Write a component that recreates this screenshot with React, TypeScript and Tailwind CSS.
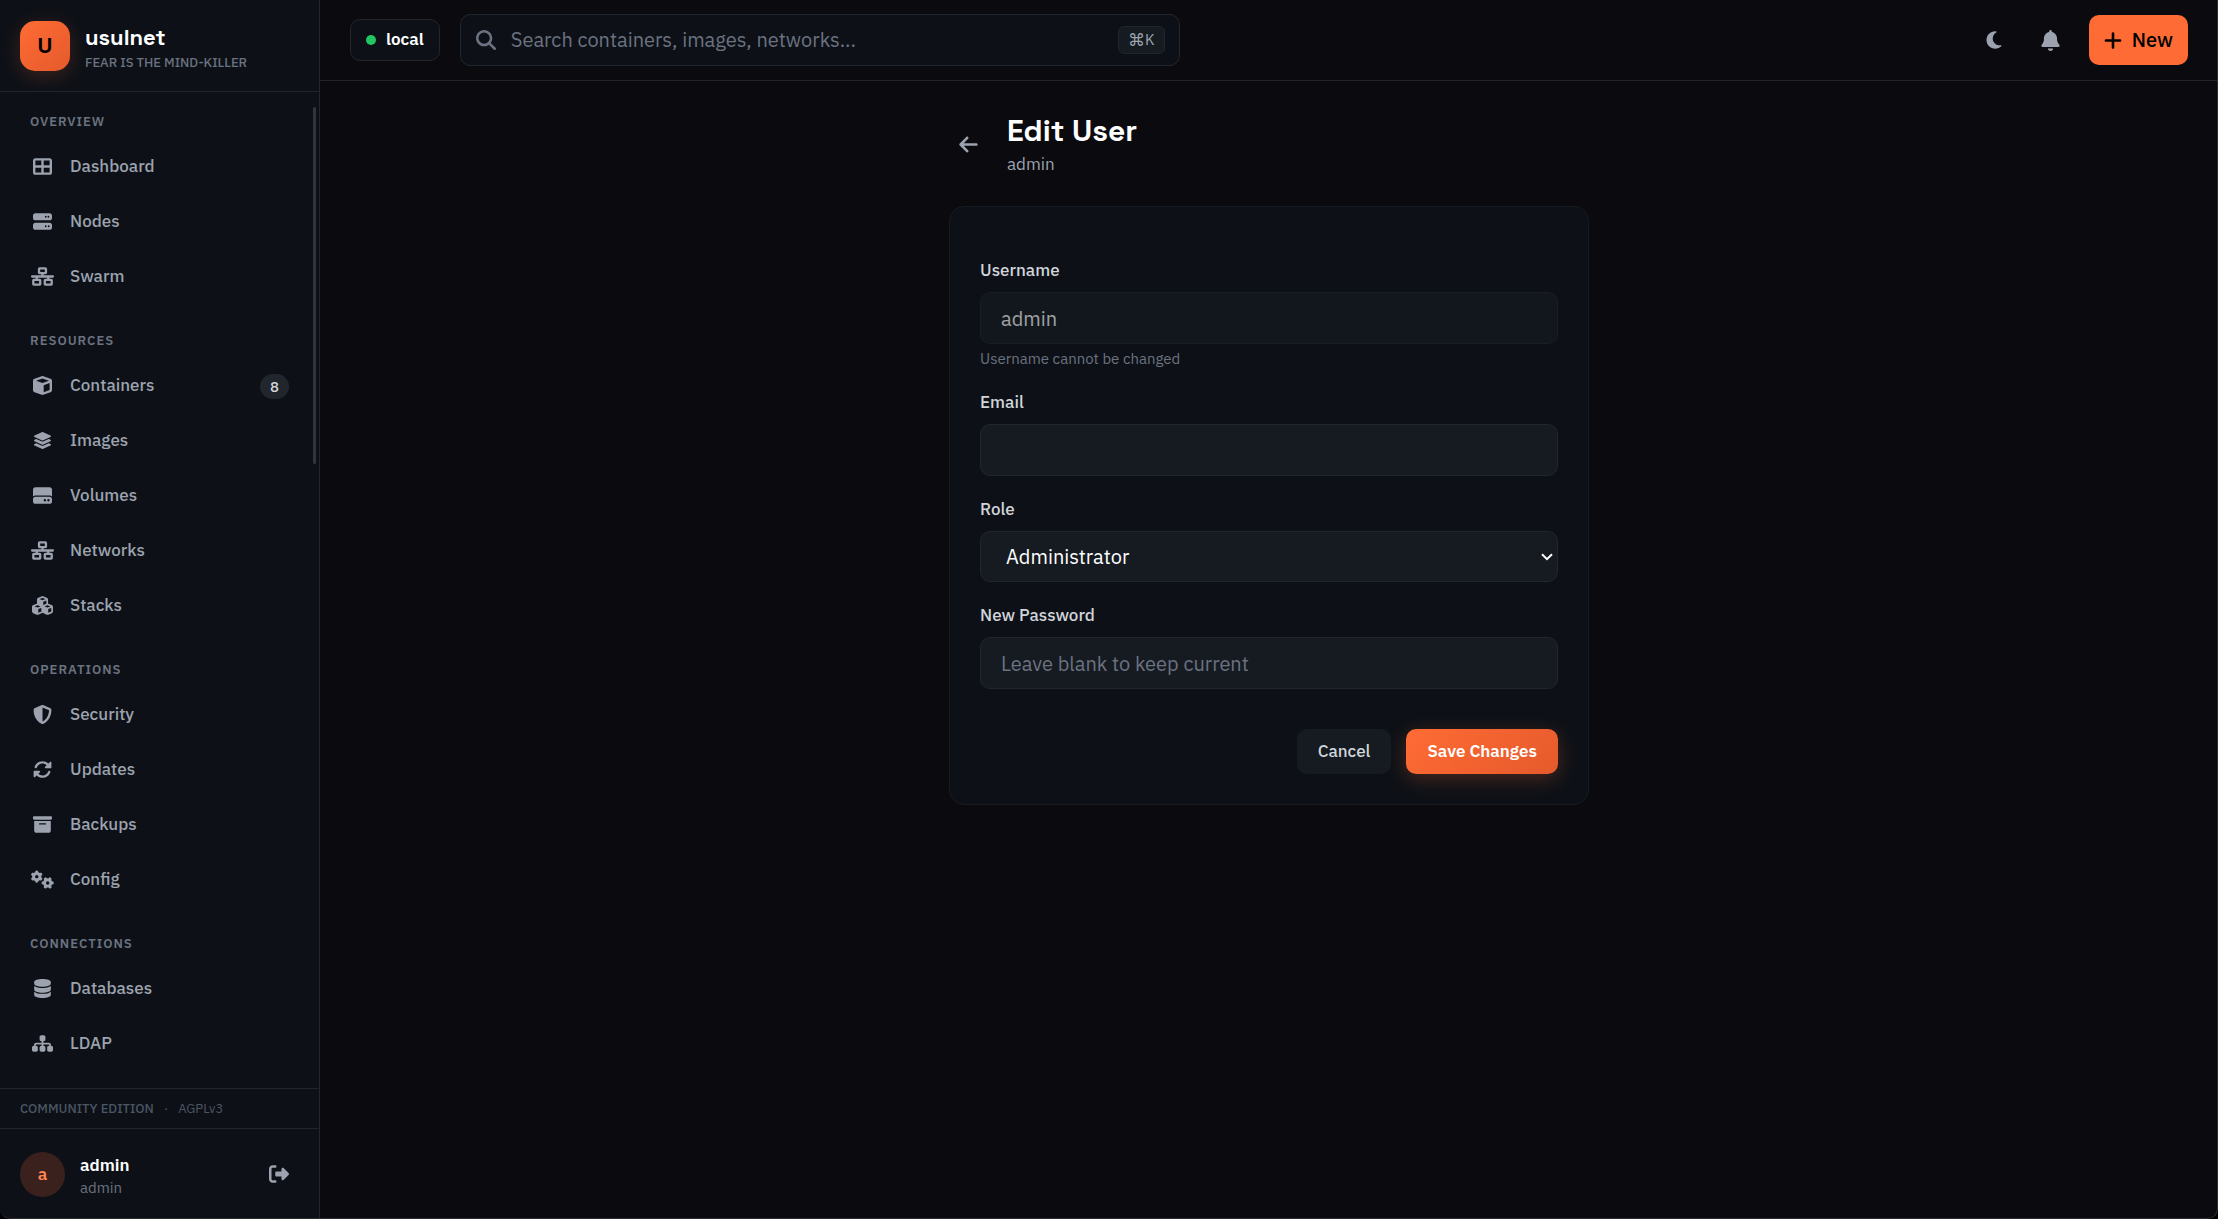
import type { ComponentType, ReactNode } from 'react';
import {
  FaArrowLeft,
  FaBell,
  FaBoxArchive,
  FaCube,
  FaCubes,
  FaDatabase,
  FaGears,
  FaHardDrive,
  FaLayerGroup,
  FaMagnifyingGlass,
  FaMoon,
  FaNetworkWired,
  FaPlus,
  FaRightFromBracket,
  FaRotate,
  FaServer,
  FaShieldHalved,
  FaSitemap,
  FaTableCellsLarge,
} from 'react-icons/fa6';

type IconType = ComponentType<{ className?: string }>;
type NavItem = { label: string; icon: IconType; size?: string; badge?: string };
type NavSection = { title: string; items: NavItem[] };

const sections: NavSection[] = [
  {
    title: 'OVERVIEW',
    items: [
      { label: 'Dashboard', icon: FaTableCellsLarge },
      { label: 'Nodes', icon: FaServer },
      { label: 'Swarm', icon: FaNetworkWired, size: 'size-[23px]' },
    ],
  },
  {
    title: 'RESOURCES',
    items: [
      { label: 'Containers', icon: FaCube, badge: '8' },
      { label: 'Images', icon: FaLayerGroup },
      { label: 'Volumes', icon: FaHardDrive },
      { label: 'Networks', icon: FaNetworkWired, size: 'size-[23px]' },
      { label: 'Stacks', icon: FaCubes, size: 'size-[21px]' },
    ],
  },
  {
    title: 'OPERATIONS',
    items: [
      { label: 'Security', icon: FaShieldHalved },
      { label: 'Updates', icon: FaRotate },
      { label: 'Backups', icon: FaBoxArchive },
      { label: 'Config', icon: FaGears, size: 'size-[23px]' },
    ],
  },
  {
    title: 'CONNECTIONS',
    items: [
      { label: 'Databases', icon: FaDatabase },
      { label: 'LDAP', icon: FaSitemap, size: 'size-[21px]' },
    ],
  },
];

function Sidebar() {
  return (
    <aside className="flex w-[320px] shrink-0 flex-col border-r border-[#21262d] bg-[#0d1117]">
      <div className="flex h-[92px] shrink-0 items-center gap-[15px] border-b border-[#21262d] px-5">
        <div className="flex size-[50px] items-center justify-center rounded-[15px] bg-linear-135 from-[#ff6b35] to-[#e55a2b] font-['Space_Grotesk','Inter',sans-serif] text-[22px] font-bold text-black shadow-[0_5px_20px_rgba(255,107,53,0.2)]">
          U
        </div>
        <div>
          <div className="font-['Space_Grotesk','Inter',sans-serif] text-[22px] leading-[34px] font-bold text-white">usulnet</div>
          <div className="text-[13px] leading-[18px] font-medium text-[#6b7280]">FEAR IS THE MIND-KILLER</div>
        </div>
      </div>

      <nav aria-label="Main" className="relative min-h-0 flex-1 overflow-hidden px-[15px] pt-5">
        {sections.map((section) => (
          <section key={section.title} className="mb-[29px]">
            <h2 className="mb-2.5 px-[15px] text-[13px] leading-[20px] font-semibold tracking-[1px] text-[#6b7280]">
              {section.title}
            </h2>
            <ul className="flex flex-col gap-[5px]">
              {section.items.map(({ label, icon: Icon, size, badge }) => (
                <li key={label}>
                  <a href="#" className="flex h-[50px] items-center gap-[15px] rounded-[10px] px-[15px] text-[17px] font-medium text-[#9ca3af]">
                    <span className="flex w-[25px] justify-center pb-0.5">
                      <Icon className={size ?? 'size-[19px]'} />
                    </span>
                    <span className="flex-1">{label}</span>
                    {badge && (
                      <span className="rounded-full bg-[#21262d] px-2.5 text-[15px] leading-[25px] text-[#d1d5db]">{badge}</span>
                    )}
                  </a>
                </li>
              ))}
            </ul>
          </section>
        ))}
        <div aria-hidden="true" className="absolute top-[15px] right-[3px] h-[357px] w-[3px] rounded-full bg-[#30363d]" />
      </nav>

      <div className="flex h-[40px] shrink-0 items-center gap-2.5 border-t border-[#21262d] px-5 text-[13px] text-[#4b5563]">
        <span className="font-medium">COMMUNITY EDITION</span>
        <span>·</span>
        <span>AGPLv3</span>
      </div>

      <div className="flex h-[91px] shrink-0 items-center gap-[15px] border-t border-[#21262d] px-5">
        <div className="flex size-[45px] items-center justify-center rounded-full bg-[#3a211d] pt-0.5 text-[17px] font-semibold text-[#ff8552]">
          a
        </div>
        <div className="flex-1 pt-0.5">
          <div className="text-[17px] leading-[25px] font-semibold text-white">admin</div>
          <div className="text-[15px] leading-[20px] text-[#6b7280]">admin</div>
        </div>
        <button type="button" aria-label="Log out" className="p-2.5 text-[#9ca3af]">
          <FaRightFromBracket className="size-5" />
        </button>
      </div>
    </aside>
  );
}

function TopBar() {
  return (
    <header className="flex h-[81px] shrink-0 items-center border-b border-[#21262d] px-[30px]">
      <button type="button" className="flex h-[42px] items-center gap-2.5 rounded-[10px] border border-[#21262d] bg-[#0d1117] px-[15px] text-[17px] font-semibold text-white">
        <span className="size-2.5 rounded-full bg-[#22c55e]" />
        local
      </button>

      <label className="ml-5 flex h-[52px] w-full max-w-[720px] items-center rounded-[10px] border border-[#21262d] bg-[#0d1117] pr-3.5 pl-[15px]">
        <FaMagnifyingGlass className="size-5 shrink-0 text-[#6b7280]" />
        <input
          type="search"
          aria-label="Search"
          placeholder="Search containers, images, networks..."
          className="ml-[15px] min-w-0 flex-1 bg-transparent text-[20px] text-white outline-none placeholder:text-[#6b7280]"
        />
        <kbd className="flex h-[28px] w-[47px] items-center justify-center rounded-[6px] border border-[#21262d] bg-[#161b22] font-['IBM_Plex_Sans','Roboto',sans-serif] text-[15px] text-[#9ca3af]">
          <span className="font-['DejaVu_Sans',sans-serif] text-[17px] leading-none">⌘</span>K
        </kbd>
      </label>

      <div className="ml-auto flex items-center">
        <button type="button" aria-label="Toggle theme" className="flex size-[46px] items-center justify-center text-[#9ca3af]">
          <FaMoon className="size-5" />
        </button>
        <button type="button" aria-label="Notifications" className="ml-[11px] flex size-[46px] items-center justify-center text-[#9ca3af]">
          <FaBell className="size-[21px]" />
        </button>
        <button type="button" className="ml-[15px] flex h-[50px] items-center gap-2.5 rounded-[10px] bg-[#ff6b35] px-[15px] text-[20px] font-medium text-black">
          <FaPlus className="h-[21px] w-[18px]" />
          New
        </button>
      </div>
    </header>
  );
}

const fieldClass =
  'block h-[52px] w-full rounded-[10px] border border-[#21262d] bg-[#161b22] px-5 text-[20px] text-white outline-none placeholder:text-[#6b7280] disabled:opacity-60';

function Field({ id, label, children }: { id: string; label: string; children: ReactNode }) {
  return (
    <div>
      <label htmlFor={id} className="mb-2 block text-[17px] leading-[27px] font-medium text-[#d1d5db]">
        {label}
      </label>
      {children}
    </div>
  );
}

function EditUserForm() {
  return (
    <form className="flex flex-col gap-5 rounded-[15px] border border-[#161b22] bg-[#0d1117] px-[30px] pt-[50px] pb-[30px]">
      <Field id="username" label="Username">
        <input id="username" type="text" defaultValue="admin" disabled className={fieldClass} />
        <p className="mt-[5px] text-[15px] leading-[20px] text-[#6b7280]">Username cannot be changed</p>
      </Field>
      <Field id="email" label="Email">
        <input id="email" type="email" className={fieldClass} />
      </Field>
      <Field id="role" label="Role">
        <div className="relative">
          <select
            id="role"
            className="block h-[51px] w-full appearance-none rounded-[10px] border border-[#21262d] bg-[#161b22] pr-8 pl-[25px] text-[20px] text-white outline-none"
          >
            <option>Administrator</option>
            <option>Operator</option>
            <option>Viewer</option>
          </select>
          <svg
            aria-hidden="true"
            viewBox="0 0 12 8"
            className="pointer-events-none absolute inset-y-0 right-[5px] my-auto h-2 w-3 fill-none stroke-white stroke-2"
          >
            <path d="M1 1.2 6 6.2l5-5" />
          </svg>
        </div>
      </Field>
      <Field id="password" label="New Password">
        <input id="password" type="password" placeholder="Leave blank to keep current" className={fieldClass} />
      </Field>
      <div className="flex justify-end gap-[15px] pt-5">
        <button type="button" className="h-[45px] rounded-[10px] bg-[#161b22] px-[21px] text-[17px] font-medium text-[#d1d5db]">
          Cancel
        </button>
        <button
          type="submit"
          className="h-[45px] rounded-[10px] bg-linear-135 from-[#ff6b35] to-[#e55a2b] px-[21px] text-[17px] font-semibold text-white shadow-[0_5px_20px_rgba(255,107,53,0.25)]"
        >
          Save Changes
        </button>
      </div>
    </form>
  );
}

export default function App() {
  return (
    <div className="h-screen bg-black">
      <div className="relative flex h-full overflow-hidden rounded-b-[10px] bg-[#0a0a0f] font-['IBM_Plex_Sans','Roboto',sans-serif]">
        <Sidebar />
        <div className="flex min-w-0 flex-1 flex-col">
          <TopBar />
          <main className="flex-1 p-[30px]">
            <div className="mx-auto max-w-[640px]">
              <div className="mb-7 flex items-center gap-5">
                <a href="#" aria-label="Back" className="flex size-[38px] items-center justify-center text-[#9ca3af]">
                  <FaArrowLeft className="size-[21px]" />
                </a>
                <div>
                  <h1 className="font-['Space_Grotesk','Inter',sans-serif] text-[30px] leading-[40px] font-bold text-white">
                    Edit User
                  </h1>
                  <p className="text-[17px] leading-[27px] text-[#9ca3af]">admin</p>
                </div>
              </div>
              <EditUserForm />
            </div>
          </main>
        </div>
        <div aria-hidden="true" className="pointer-events-none absolute inset-0 rounded-b-[10px] border-r border-b border-[#2d2d30]" />
      </div>
    </div>
  );
}
